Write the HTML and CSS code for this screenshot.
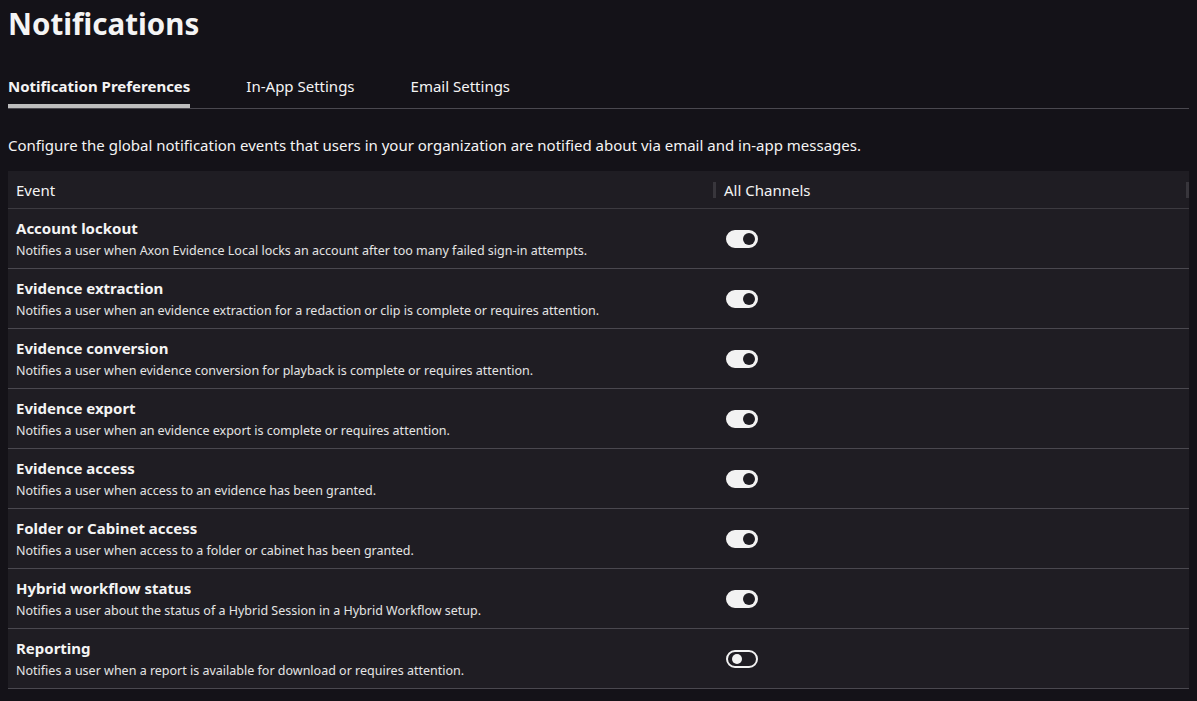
FILE: index.html
```html
<!DOCTYPE html>
<html>

<head>
    <title>Notifications</title>
    <link rel="stylesheet" href="styles.css">
</head>

<body>
    <h1 class="page-title">Notifications</h1>

    <div class="tabs">
        <span class="tab active">Notification Preferences</span>
        <span class="tab">In-App Settings</span>
        <span class="tab">Email Settings</span>
    </div>

    <p class="intro">Configure the global notification events that users in your organization are notified about via email and in-app messages.</p>

    <div class="events">
        <div class="events-head">
            <div class="col-event">Event</div>
            <div class="col-channels">All Channels</div>
        </div>

        <div class="event-row">
            <div class="col-event">
                <div class="event-name">Account lockout</div>
                <div class="event-desc">Notifies a user when Axon Evidence Local locks an account after too many failed sign-in attempts.</div>
            </div>
            <div class="col-channels"><span class="toggle on"></span></div>
        </div>
        <div class="event-row">
            <div class="col-event">
                <div class="event-name">Evidence extraction</div>
                <div class="event-desc">Notifies a user when an evidence extraction for a redaction or clip is complete or requires attention.</div>
            </div>
            <div class="col-channels"><span class="toggle on"></span></div>
        </div>
        <div class="event-row">
            <div class="col-event">
                <div class="event-name">Evidence conversion</div>
                <div class="event-desc">Notifies a user when evidence conversion for playback is complete or requires attention.</div>
            </div>
            <div class="col-channels"><span class="toggle on"></span></div>
        </div>
        <div class="event-row">
            <div class="col-event">
                <div class="event-name">Evidence export</div>
                <div class="event-desc">Notifies a user when an evidence export is complete or requires attention.</div>
            </div>
            <div class="col-channels"><span class="toggle on"></span></div>
        </div>
        <div class="event-row">
            <div class="col-event">
                <div class="event-name">Evidence access</div>
                <div class="event-desc">Notifies a user when access to an evidence has been granted.</div>
            </div>
            <div class="col-channels"><span class="toggle on"></span></div>
        </div>
        <div class="event-row">
            <div class="col-event">
                <div class="event-name">Folder or Cabinet access</div>
                <div class="event-desc">Notifies a user when access to a folder or cabinet has been granted.</div>
            </div>
            <div class="col-channels"><span class="toggle on"></span></div>
        </div>
        <div class="event-row">
            <div class="col-event">
                <div class="event-name">Hybrid workflow status</div>
                <div class="event-desc">Notifies a user about the status of a Hybrid Session in a Hybrid Workflow setup.</div>
            </div>
            <div class="col-channels"><span class="toggle on"></span></div>
        </div>
        <div class="event-row">
            <div class="col-event">
                <div class="event-name">Reporting</div>
                <div class="event-desc">Notifies a user when a report is available for download or requires attention.</div>
            </div>
            <div class="col-channels"><span class="toggle"></span></div>
        </div>
    </div>
</body>

</html>
```

FILE: styles.css
```css
body {
    background-color: #141218;
    color: #f4f4f4;
    font-family: "Noto Sans", Arial, sans-serif;
    margin: 0;
    padding: 0 8px;
}

.page-title {
    font-size: 29.5px;
    font-weight: 700;
    line-height: 48px;
    margin: 0;
}

.tabs {
    border-bottom: 1px solid #4a484f;
    display: flex;
    gap: 56px;
    margin-top: 24px;
}

.tab {
    border-bottom: 4px solid transparent;
    font-size: 15px;
    line-height: 20px;
    padding: 4px 0 8px;
}

.tab.active {
    border-bottom-color: #bdbdbd;
    font-weight: 700;
}

.intro {
    font-size: 15px;
    line-height: 20px;
    margin: 26px 0 16px;
}

.events {
    background-color: #1f1d23;
}

.events-head,
.event-row {
    display: flex;
}

.events-head {
    align-items: center;
    border-bottom: 1px solid #3c3a40;
    font-size: 15px;
    height: 37px;
}

.events-head .col-channels {
    border-left: 3px solid #38363c;
    border-right: 3px solid #38363c;
    line-height: 16px;
    padding-left: 8px;
}

.col-event {
    box-sizing: border-box;
    padding-left: 8px;
    width: 705px;
}

.col-channels {
    flex: 1;
}

.event-row {
    align-items: center;
    border-bottom: 1px solid #4a484f;
    height: 59px;
}

.event-name {
    font-size: 15px;
    font-weight: 700;
    line-height: 20px;
}

.event-desc {
    color: #e4e4e4;
    font-size: 12.5px;
    line-height: 18px;
    margin-top: 4px;
}

.event-row .col-channels {
    padding-left: 13px;
}

.toggle {
    background-color: #f2f2f2;
    border: 2px solid #f2f2f2;
    border-radius: 10px;
    box-sizing: border-box;
    display: block;
    height: 18px;
    position: relative;
    width: 32px;
}

.toggle::after {
    background-color: #1f1d23;
    border-radius: 50%;
    content: "";
    height: 12px;
    position: absolute;
    right: 1px;
    top: 1px;
    width: 12px;
}

.toggle:not(.on) {
    background-color: transparent;
}

.toggle:not(.on)::after {
    background-color: #f2f2f2;
    height: 10px;
    left: 4px;
    right: auto;
    top: 2px;
    width: 10px;
}
```
